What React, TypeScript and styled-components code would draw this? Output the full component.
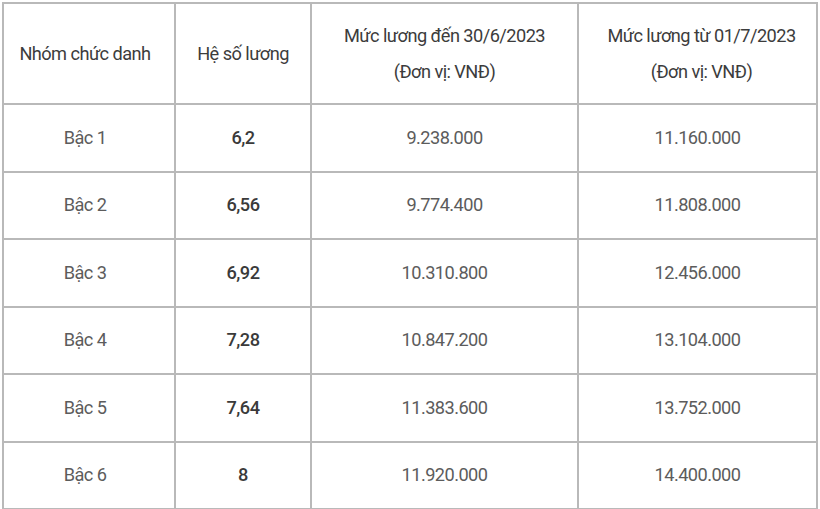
import React from "react";
import styled, { createGlobalStyle } from "styled-components";

const GlobalStyle = createGlobalStyle`
  html, body {
    margin: 0;
    padding: 0;
    background: #ffffff;
  }
  body {
    font-family: Roboto, "Noto Sans", "Liberation Sans", sans-serif;
  }
`;

const Page = styled.div`
  width: 820px;
  height: 509px;
  background: #ffffff;
  padding: 2px 0 0 2px;
  box-sizing: border-box;
`;

const Grid = styled.div`
  display: grid;
  grid-template-columns: 170px 134px 265px 237px;
  grid-template-rows: 99px repeat(6, 65.5px);
  gap: 2px;
  padding: 2px;
  width: fit-content;
  background: #b9b9b9;
`;

const Cell = styled.div<{ $head?: boolean; $bold?: boolean; $shift?: number }>`
  background: #ffffff;
  display: flex;
  flex-direction: column;
  align-items: center;
  justify-content: center;
  text-align: center;
  font-size: 18.2px;
  line-height: 36px;
  letter-spacing: -0.55px;
  color: ${(p) => (p.$head ? "#3c3c3c" : p.$bold ? "#3a3a3a" : "#5c5c5c")};
  font-weight: ${(p) => (p.$bold ? 500 : 400)};
  padding-right: ${(p) => (p.$shift && p.$shift > 0 ? p.$shift : 0)}px;
  padding-left: ${(p) => (p.$shift && p.$shift < 0 ? -p.$shift : 0)}px;
`;

const Line = styled.span`
  display: block;
`;

const rows = [
  ["Bậc 1", "6,2", "9.238.000", "11.160.000"],
  ["Bậc 2", "6,56", "9.774.400", "11.808.000"],
  ["Bậc 3", "6,92", "10.310.800", "12.456.000"],
  ["Bậc 4", "7,28", "10.847.200", "13.104.000"],
  ["Bậc 5", "7,64", "11.383.600", "13.752.000"],
  ["Bậc 6", "8", "11.920.000", "14.400.000"],
];

export default function App() {
  return (
    <>
      <GlobalStyle />
      <Page>
        <Grid>
          <Cell $head $shift={8}>Nhóm chức danh</Cell>
          <Cell $head>Hệ số lương</Cell>
          <Cell $head>
            <Line>Mức lương đến 30/6/2023</Line>
            <Line>(Đơn vị: VNĐ)</Line>
          </Cell>
          <Cell $head $shift={-8}>
            <Line>Mức lương từ 01/7/2023</Line>
            <Line>(Đơn vị: VNĐ)</Line>
          </Cell>
          {rows.map((r) => (
            <React.Fragment key={r[0]}>
              <Cell $shift={8}>{r[0]}</Cell>
              <Cell $bold>{r[1]}</Cell>
              <Cell>{r[2]}</Cell>
              <Cell>{r[3]}</Cell>
            </React.Fragment>
          ))}
        </Grid>
      </Page>
    </>
  );
}
